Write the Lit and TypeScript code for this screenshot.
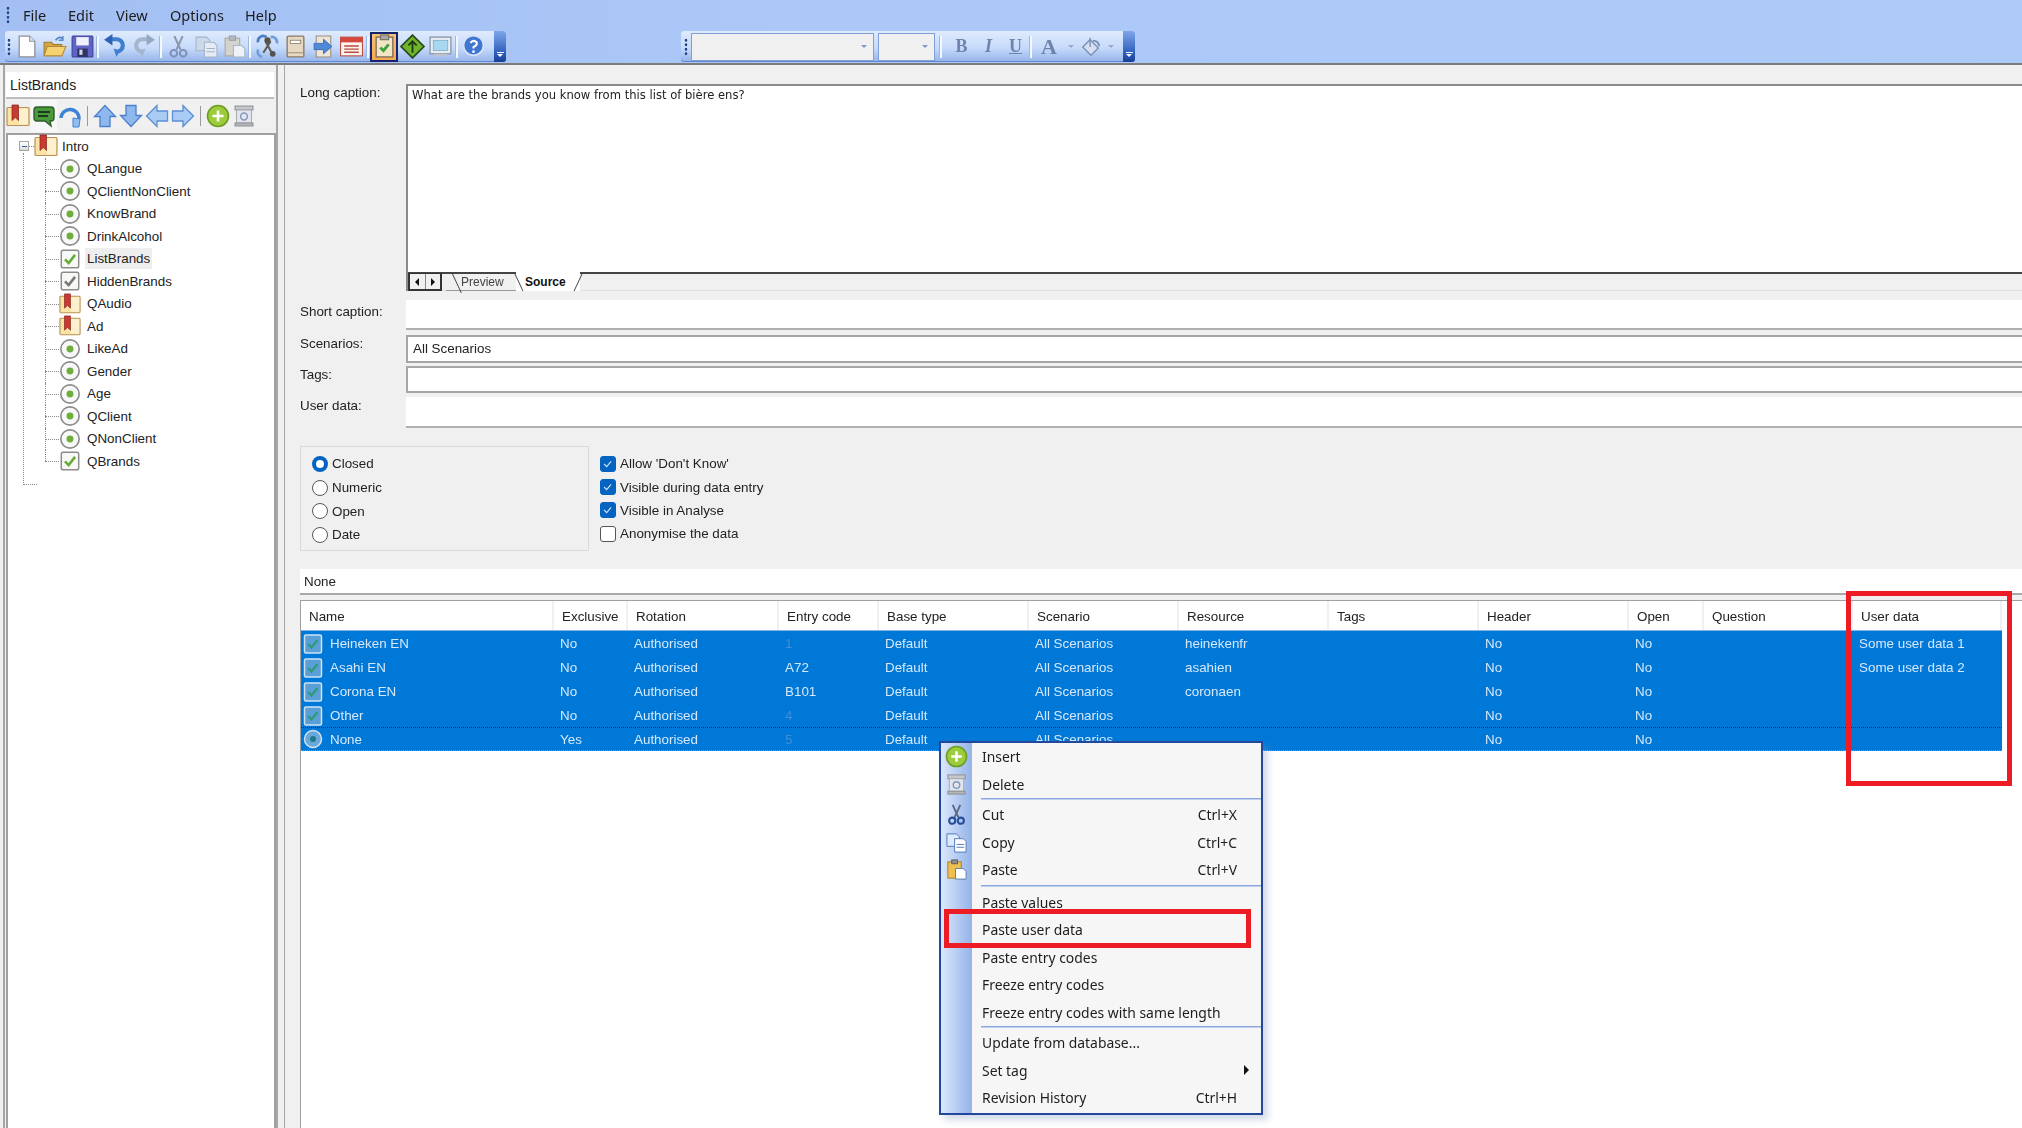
import { LitElement, html, css, svg } from "lit";
import { customElement } from "lit/decorators.js";

const I: Record<string, any> = {
  book: svg`<rect x="1" y="3.500" width="22" height="18" rx="1" fill="#fbe3a6" stroke="#b8925a" stroke-width="1.200"/><rect x="13" y="4.500" width="9" height="16" fill="#fdf0cd"/><path d="M6 1h6.500v15.500l-3.250-3-3.250 3z" fill="#c93a30" stroke="#8e2a26" stroke-width=".8"/>`,
  radio: svg`<circle cx="12" cy="12" r="10" fill="#f8f8f8" stroke="#8c8c8c" stroke-width="1.800"/><circle cx="12" cy="12" r="3.800" fill="#6fae3c"/>`,
  check: svg`<rect x="2.500" y="2.500" width="19" height="19" rx="2" fill="#f8f8f6" stroke="#8c8c8c" stroke-width="1.600"/><path d="M6.500 12.500l4 4 7-9" fill="none" stroke="#63ad35" stroke-width="2.800"/>`,
  hidden: svg`<rect x="2.500" y="2.500" width="19" height="19" rx="2" fill="#f8f8f6" stroke="#8c8c8c" stroke-width="1.600"/><path d="M6.500 12.500l4 4 7-9" fill="none" stroke="#777" stroke-width="2.800"/>`,
  comment: svg`<path d="M5 3h14q3 0 3 3v8q0 3-3 3h-1l1 5-6-5H5q-3 0-3-3V6q0-3 3-3z" fill="#4a9a3c" stroke="#2e5e2a" stroke-width="1.400"/><path d="M6 8h12M6 12h10" stroke="#1e3a20" stroke-width="1.800"/>`,
  loop: svg`<path d="M3 14a9 9 0 1 1 18 1" fill="none" stroke="#3f83d6" stroke-width="3.400"/><path d="M15 23v-9l7 1-1 8z" fill="#8ebdf0" stroke="#3f83d6"/>`,
  up: svg`<path d="M12 1.500l10.500 11H17v10H7v-10H1.500z" fill="#8eb8ee" stroke="#4b7fc9" stroke-width="1.300"/>`,
  down: svg`<path d="M12 22.500L1.500 11.500H7v-10h10v10h5.500z" fill="#8eb8ee" stroke="#4b7fc9" stroke-width="1.300"/>`,
  left: svg`<path d="M1.500 12L12 1.500V7h10.500v10H12v5.500z" fill="#a9cbf4" stroke="#5d8fd6" stroke-width="1.300"/>`,
  right: svg`<path d="M22.500 12L12 1.500V7H1.500v10H12v5.500z" fill="#a9cbf4" stroke="#5d8fd6" stroke-width="1.300"/>`,
  plus: svg`<circle cx="12" cy="12" r="10.500" fill="#9ccc3c" stroke="#6c9e25" stroke-width="1.600"/><path d="M12 6.500v11M6.500 12h11" stroke="#fff" stroke-width="2.600"/>`,
  bin: svg`<rect x="3" y="2" width="18" height="4" fill="#c4c8ce" stroke="#8d8f94"/><rect x="4.500" y="6" width="15" height="13" fill="#e2e6ec" stroke="#a7aab0"/><circle cx="12" cy="12.500" r="3.400" fill="none" stroke="#8499bd" stroke-width="1.500"/><rect x="3" y="19" width="18" height="3" fill="#b4b7bc" stroke="#8d8f94"/>`,
  page: svg`<path d="M5 2h10l5 5v15H5z" fill="#fff" stroke="#8a8f99" stroke-width="1.200"/><path d="M15 2v5h5" fill="#dfe5ee" stroke="#8a8f99"/>`,
  folder: svg`<path d="M2 8h7l2 2h8v10H2z" fill="#d4a445" stroke="#a07b2c"/><path d="M5 12h18l-4 9H2z" fill="#f6d271" stroke="#b08a33"/><path d="M13 6q4-5 7-1" fill="none" stroke="#5a87c6" stroke-width="1.600"/><path d="M20 2v4h-4" fill="none" stroke="#5a87c6" stroke-width="1.400"/>`,
  save: svg`<rect x="2" y="2" width="20" height="20" rx="1" fill="#5f63c5" stroke="#3c3f96"/><rect x="6" y="3" width="12" height="8" fill="#eef0fa"/><rect x="7" y="14" width="10" height="8" fill="#30325f"/><rect x="9" y="15" width="3" height="5" fill="#d4d6ea"/>`,
  undo: svg`<path d="M9 5h5a5.500 5.500 0 0 1 0 12h-1" fill="none" stroke="#3f7fd0" stroke-width="4"/><path d="M10 0v11L2 5.500z" fill="#2d63b5"/><path d="M11 14l3 8 3-6z" fill="#3f7fd0"/>`,
  redo: svg`<path d="M15 5h-5a5.500 5.500 0 0 0 0 12h1" fill="none" stroke="#a4b5cd" stroke-width="4"/><path d="M14 0v11l8-5.500z" fill="#94a8c3"/><path d="M13 14l-3 8-3-6z" fill="#a4b5cd"/>`,
  cut: svg`<path d="M8 2l6 13M16 2l-6 13" stroke="#8a97ad" stroke-width="2"/><circle cx="7.500" cy="18.500" r="3.200" fill="none" stroke="#7d93bc" stroke-width="2"/><circle cx="16.500" cy="18.500" r="3.200" fill="none" stroke="#7d93bc" stroke-width="2"/>`,
  cutOn: svg`<path d="M8 2l6 13M16 2l-6 13" stroke="#5c6a80" stroke-width="2"/><circle cx="7.500" cy="18.500" r="3.200" fill="none" stroke="#27509c" stroke-width="2.200"/><circle cx="16.500" cy="18.500" r="3.200" fill="none" stroke="#27509c" stroke-width="2.200"/>`,
  copy: svg`<path d="M2 3h10l3 3v10H2z" fill="#ccd9ea" stroke="#a5b3c6"/><path d="M10 8h9l3 3v11H10z" fill="#e4ebf4" stroke="#a5b3c6"/><path d="M12 14h8M12 17h8" stroke="#a5b3c6"/>`,
  copyOn: svg`<path d="M2 3h10l3 3v10H2z" fill="#dfeafc" stroke="#4f78bc"/><path d="M10 8h9l3 3v11H10z" fill="#fff" stroke="#4f78bc"/><path d="M12 14h8M12 17h8" stroke="#4f78bc"/>`,
  paste: svg`<rect x="3" y="4" width="14" height="17" fill="#d5d4cc" stroke="#a5a79f"/><rect x="7" y="2" width="6" height="4" fill="#b6bcc6" stroke="#989ca5"/><path d="M11 11h8l3 3v8H11z" fill="#eef1f6" stroke="#a5b3c6"/>`,
  pasteOn: svg`<rect x="3" y="4" width="14" height="17" fill="#eec052" stroke="#a57f2a"/><rect x="7" y="2" width="6" height="4" fill="#8d8f94" stroke="#5a5c60"/><path d="M11 11h8l3 3v8H11z" fill="#fff" stroke="#5c7cb0"/>`,
  wizard: svg`<path d="M10 7l6 11M15 7L8 18" stroke="#5e5c58" stroke-width="2"/><path d="M3 8a5 5 0 0 1 8-5" fill="none" stroke="#4a7ec8" stroke-width="2.600"/><path d="M15 3a5 5 0 0 1 6 6" fill="none" stroke="#6d9ee0" stroke-width="2.600"/><path d="M3 15a5 5 0 0 0 4 7" fill="none" stroke="#6d9ee0" stroke-width="2.600"/><circle cx="12" cy="6" r="3" fill="#55534e"/><circle cx="17" cy="19" r="2.800" fill="#55534e"/>`,
  note: svg`<rect x="4" y="2" width="16" height="20" rx="1" fill="#e6d9c4" stroke="#8a7a64" stroke-width="1.300"/><rect x="7" y="6" width="10" height="3" fill="#fff" stroke="#8a7a64" stroke-width=".8"/><path d="M4 18h16" stroke="#a09078"/>`,
  imp: svg`<path d="M5 2h14v20H5z" fill="#ece5d8" stroke="#9a8e7c"/><path d="M3 9h9V5l8 7-8 7v-4H3z" fill="#4e8ad8" stroke="#2f68b5" stroke-width=".8"/>`,
  list: svg`<rect x="1.500" y="3" width="21" height="18" fill="#faf4ee" stroke="#b84a3e"/><rect x="1.500" y="3" width="21" height="5" fill="#d4483c"/><path d="M5 11.500h14M5 14.500h14M5 17.500h14" stroke="#b84a3e" stroke-width="1.300"/>`,
  clip: svg`<rect x="4" y="3" width="16" height="19" fill="#f3e6c8" stroke="#7c6f58" stroke-width="1.300"/><rect x="8" y="1" width="8" height="4.500" fill="#a9a69d" stroke="#6e6c66"/><path d="M8 13l3 3 5-6" fill="none" stroke="#3da23a" stroke-width="2.800"/>`,
  diamond: svg`<path d="M12 1l11 11-11 11L1 12z" fill="#6fb52a" stroke="#2c4a1d" stroke-width="1.600"/><path d="M12 18V7M8 11l4-4 4 4" fill="none" stroke="#1f3a14" stroke-width="1.800"/>`,
  monitor: svg`<rect x="2" y="3" width="20" height="16" fill="#e8edf4" stroke="#8d97a6" stroke-width="1.300"/><rect x="5" y="6" width="14" height="10" fill="#a8d8ef" stroke="#6f9ec2" stroke-width=".6"/><rect x="6" y="19" width="12" height="2.500" fill="#bcc3cd"/>`,
  help: svg`<circle cx="12" cy="11" r="9.500" fill="#3e76d2" stroke="#d5e2f6" stroke-width="1.600"/><path d="M9 8.500q3-3.500 6-.5 1 2.500-3 4.500v1.500" fill="none" stroke="#fff" stroke-width="2"/><circle cx="12" cy="17" r="1.300" fill="#fff"/>`,
  paint: svg`<path d="M11 4l9 9-8 8-9-9z" fill="#d4dff0" stroke="#7b8fb5" stroke-width="1.500"/><path d="M11 12V2" stroke="#7b8fb5" stroke-width="1.500"/><path d="M14 5q6 0 7 6" fill="none" stroke="#7b8fb5" stroke-width="2"/>`,
};

const ic = (n: string, cls = "i") => html`<svg class=${cls} viewBox="0 0 24 24">${I[n]}</svg>`;

const TREE: [string, string][] = [
  ["QLangue", "radio"], ["QClientNonClient", "radio"], ["KnowBrand", "radio"], ["DrinkAlcohol", "radio"],
  ["ListBrands", "check"], ["HiddenBrands", "hidden"], ["QAudio", "book"], ["Ad", "book"],
  ["LikeAd", "radio"], ["Gender", "radio"], ["Age", "radio"], ["QClient", "radio"], ["QNonClient", "radio"], ["QBrands", "check"],
];
const HEAD = ["Name", "Exclusive", "Rotation", "Entry code", "Base type", "Scenario", "Resource", "Tags", "Header", "Open", "Question", "User data"];
const ROWS = [
  { ic: "c", name: "Heineken EN", ex: "No", code: "1", dim: true, res: "heinekenfr", ud: "Some user data 1" },
  { ic: "c", name: "Asahi EN", ex: "No", code: "A72", dim: false, res: "asahien", ud: "Some user data 2" },
  { ic: "c", name: "Corona EN", ex: "No", code: "B101", dim: false, res: "coronaen", ud: "" },
  { ic: "c", name: "Other", ex: "No", code: "4", dim: true, res: "", ud: "" },
  { ic: "r", name: "None", ex: "Yes", code: "5", dim: true, res: "", ud: "" },
];

@customElement("app-root")
export class AppRoot extends LitElement {
  static styles = css`
    :host { display: block; position: relative; width: 2022px; height: 1128px; overflow: hidden; background: #f0f0f0;
      font: 13.400px "Liberation Sans", Arial, sans-serif; color: #222; }
    * { box-sizing: border-box; }
    .soft { filter: blur(.45px); }
    .i { width: 24px; height: 24px; display: block; flex: none; }
    .i18 { width: 22px; height: 22px; display: block; flex: none; }

    .top { height: 65px; background: linear-gradient(to right, #a3bff3, #abc8f8 40%, #aecaf7); border-bottom: 2px solid #7c7c7c; }
    .menubar { height: 31px; display: flex; align-items: center; padding: 0 0 2px 6px; font: 14.500px "Noto Sans", sans-serif; color: #1c1c1c; }
    .grip { width: 4px; height: 18px; flex: none; background: radial-gradient(circle, #27468a 1.300px, transparent 1.600px) 0 0 / 4px 4.500px repeat-y; }
    .m1 { margin-left: 13px; width: 45px; } .m2 { width: 48px; } .m3 { width: 54px; } .m4 { width: 75px; }
    .bars { display: flex; height: 31px; }
    .tb { display: flex; align-items: center; height: 31px; border-radius: 3px;
      background: linear-gradient(#dfebfd, #c6dafa 55%, #9ab8ec 95%); box-shadow: inset 0 -1px 0 #5f88cf; }
    .tb1 { margin-left: 5px; width: 501px; padding-left: 2px; }
    .tb2 { margin-left: 175px; width: 454px; padding-left: 3px; }
    .tb .grip { margin-right: 1px; }
    .tb2 .grip { margin-right: 3px; }
    .b { width: 28px; height: 28px; flex: none; display: flex; align-items: center; justify-content: center; }
    .b .i { width: 25px; height: 25px; }
    .b.gap { margin-left: 2px; }
    .b.on { background: linear-gradient(#f8c27a, #f5a94e); border: 2px solid #14236e; height: 30px; }
    .s { width: 2px; height: 22px; background: #f3f8ff; box-shadow: -1px 0 0 #9db8e4; margin: 0 1px; flex: none; }
    .s.a { margin: 0 2px; }
    .s.c { margin: 0 2px 0 1px; }
    .s.d { margin: 0 1px 0 2px; }
    .s.w { margin: 0 6px 0 5px; }
    .chev { margin-left: auto; width: 12px; height: 31px; flex: none; border-radius: 0 3px 3px 0; background: linear-gradient(#7ea6ea, #2e5fba 70%, #173f93);
      display: flex; flex-direction: column; align-items: center; justify-content: flex-end; padding-bottom: 5px; }
    .chev i { display: block; width: 7px; height: 1px; background: #fff; margin-bottom: 1px; }
    .chev b { display: block; width: 0; height: 0; border: 3px solid transparent; border-top-color: #fff; border-bottom: 0; }
    .combo { height: 28px; background: #f0f0f0; border: 1.500px solid #7f9fd6; display: flex; align-items: center; justify-content: flex-end; padding-right: 6px; flex: none; }
    .combo i { display: block; width: 0; height: 0; border: 3.500px solid transparent; border-top-color: #7b98c8; border-bottom: 0; }
    .c1 { width: 183px; } .c2 { width: 57px; margin-left: 4px; }
    .fm { font: bold 18px "Liberation Serif", serif; color: #6f84ad; width: 27px; text-align: center; flex: none; }
    .fm.ital { font-style: italic; } .fm.un { text-decoration: underline; }
    .fm.big { font-size: 22px; width: 26px; margin-left: 3px; }
    .dd { width: 0; height: 0; border: 3px solid transparent; border-top-color: #96a8c6; border-bottom: 0; flex: none; margin: 0 6px; }

    .main { display: flex; height: 1063px; }
    .left { width: 275px; flex: none; margin-left: 3px; border-left: 2px solid #a6a6a6; border-right: 2px solid #a6a6a6; padding-left: 1px; display: flex; flex-direction: column; }
    .title { margin: 7px 2px 0 0; height: 27px; background: #fff; border-bottom: 2px solid #bdbdbd; padding: 0 4px; display: flex; align-items: center; font-size: 14px; }
    .ltools { height: 34px; display: flex; align-items: center; margin-left: -1px; }
    .lb { width: 26px; height: 26px; flex: none; display: flex; align-items: center; justify-content: center; }
    .lb .i { width: 24px; height: 24px; }
    .lb.act { background: #f7f7f7; height: 32px; }
    .ls { width: 1px; height: 20px; background: #9a9a9a; margin: 0 4px; flex: none; }
    .tree { flex: 1; background: #fff; border: 2px solid #a0a0a0; border-bottom: 0; position: relative; }
    .node { height: 22.500px; display: flex; align-items: center; padding-left: 51px; position: relative; }
    .node .i { width: 22px; height: 22px; margin-right: 5px; position: relative; }
    .node::before { content: ""; position: absolute; left: 37px; top: 0; height: 100%; border-left: 1px dotted #888; }
    .node::after { content: ""; position: absolute; left: 37px; top: 50%; width: 14px; border-top: 1px dotted #888; }
    .node.last::before { height: 50%; }
    .node span { padding: 0 1px; line-height: 21px; }
    .node.sel span { background: #eee; padding: 0 2px; margin-left: -1px; }
    .root { height: 22.500px; display: flex; align-items: center; padding-left: 11px; position: relative; }
    .root .mn { width: 10px; height: 10px; border: 1px solid #a3a3a3; background: linear-gradient(#fff, #ddd); position: relative; flex: none; }
    .root .mn::after { content: ""; position: absolute; left: 1.500px; top: 3.500px; width: 5px; height: 1px; background: #3c5f99; }
    .root .hl { width: 5px; border-top: 1px dotted #888; flex: none; }
    .root .i { width: 24px; height: 24px; margin-right: 4px; }
    .trunk { height: 12px; margin-left: 15px; width: 14px; border-bottom: 1px dotted #888; }
    .nodes { position: relative; }
    .nodes::before { content: ""; position: absolute; left: 15px; top: -5px; bottom: 0; border-left: 1px dotted #888; }

    .split { width: 7px; flex: none; border-right: 1px solid #a6a6a6; }
    .right { flex: 1; min-width: 0; padding: 19px 0 0 15px; }
    .fr { display: grid; grid-template-columns: 106px 1fr; margin-top: 4px; }
    .fr label { padding-top: 1px; line-height: 16px; }
    .ed { height: 207px; background: #fff; border: 2px solid #8a8a8a; border-right: 0; border-bottom: 0; display: flex; flex-direction: column; }
    .ed p { margin: 0; flex: 1; padding: 1px 3px 1px 4px; font: 11.580px/16px "DejaVu Sans", sans-serif; color: #222; }
    .strip { height: 19px; flex: none; border-top: 2px solid #444; background: #f0f0f0; display: flex; border-bottom: 1px solid #dedede; }
    .nav { width: 34px; height: 18px; margin-top: -1px; border: 2px solid #333; border-top-width: 1px; display: flex; flex: none; background: #f0f0f0; }
    .nav span { flex: 1; display: flex; align-items: center; justify-content: center; }
    .nav span + span { border-left: 1px solid #888; }
    .nav i { display: block; width: 0; height: 0; border: 4px solid transparent; }
    .nav .lf { border-right-color: #111; border-left: 0; } .nav .rt { border-left-color: #111; border-right: 0; }
    .tab { position: relative; height: 17px; display: flex; align-items: center; font-size: 12px; flex: none; }
    .tab::before, .tab::after { content: ""; position: absolute; top: 0; height: 19px; border-left: 1px solid #444; }
    .t1 { width: 70px; padding-left: 15px; margin-left: 4px; color: #444; border-bottom: 1px solid #999; }
    .t1::before { left: 6px; transform: skewX(25deg); transform-origin: top; }
    .t1::after { display: none; }
    .t2 { width: 64px; padding-left: 9px; margin-top: -2px; height: 19px; background: #fff; font-weight: bold; color: #111; }
    .t2::before { left: 2px; transform: skewX(25deg); }
    .t2::after { right: 1px; transform: skewX(-25deg); }
    .fld { background: #fff; border-bottom: 2px solid #b0b0b0; }
    .box { background: #fff; border: 2px solid #a6a6a6; border-right: 0; display: flex; align-items: center; padding-left: 5px; }
    .h30 { height: 30px; } .h27 { height: 27.500px; } .h31 { height: 31px; }
    .mt0 { margin-top: 0; } .mt9 { margin-top: 9px; } .mt5 { margin-top: 5px; } .mt3 { margin-top: 3px; }
    .fr label.pt4 { padding-top: 4px; }
    .opts { display: flex; margin-top: 18px; }
    .group { width: 289px; height: 105px; border: 1px solid #dadada; padding: 5px 0 0 11px; flex: none; }
    .opt { height: 23.700px; display: flex; align-items: center; gap: 4px; }
    .rd { width: 16px; height: 16px; border: 1.500px solid #555; border-radius: 50%; background: #fff; flex: none; }
    .rd.on { border: 4.500px solid #0563c1; }
    .cks { margin-left: 11px; padding-top: 6px; }
    .ck { height: 23.400px; display: flex; align-items: center; gap: 4px; }
    .cb { width: 16px; height: 16px; border-radius: 3px; border: 1.500px solid #555; background: #fff; flex: none; display: block; }
    .cb.on { background: #0563c1; border-color: #0563c1; }
    .none { margin-top: 18px; height: 26px; background: #fff; border-bottom: 2px solid #a8a8a8; padding-left: 4px; display: flex; align-items: center; }
    .table { margin-top: 5px; height: 530px; background: #fff; border: 1px solid #a0a0a0; border-right: 0; border-bottom: 0; }
    .g { display: grid; grid-template-columns: 251px 74px 151px 100px 150px 150px 150px 150px 150px 75px 149px 151px; width: 1701px; }
    .hd { height: 30px; border-bottom: 1px solid #7fb4ea; }
    .hd div { padding: 2px 0 0 8px; border-left: 2px solid #f0f0f0; display: flex; align-items: center; }
    .hd div:first-child { border-left: 0; }
    .hd div:last-child { border-right: 2px solid #f0f0f0; }
    .rw { height: 24px; background: #0078d7; color: #d6e8fb; align-items: center; }
    .rw.foc { border-top: 1px dotted #3a2a10; border-bottom: 1px dotted #c8862e; }
    .rw div { padding-left: 8px; white-space: nowrap; padding-top: 1px; }
    .rw.foc div { padding-top: 0; }
    .rw .nm { display: flex; align-items: center; padding-left: 2px; height: 100%; gap: 7px; }
    .rw .nm svg { width: 20px; height: 22px; flex: none; }
    .dim { color: #3f8fd6; }
    .ctx { position: absolute; left: 939px; top: 741px; width: 324px; height: 374px; border: 2px solid #23479b; box-shadow: 5px 5px 7px rgba(130, 150, 190, .35);
      background: linear-gradient(to right, #dbe8fc, #94b3e8) 0 0 / 31px 100% no-repeat, #f6f6f6;
      font: 13.900px "Noto Sans", sans-serif; color: #1d1d1d; }
    .mi { height: 27.500px; display: flex; align-items: center; position: relative; }
    .mi .g0 { width: 31px; flex: none; display: flex; justify-content: center; }
    .mi .g0 svg { width: 23px; height: 23px; }
    .mi .t { margin-left: 10px; flex: 1; }
    .mi .k { margin-right: 24px; }
    .mi .ar { width: 0; height: 0; border: 5px solid transparent; border-left-color: #111; border-right: 0; margin-right: 12px; }
    .sp { height: 3px; margin-left: 40px; background: linear-gradient(#8aa9e0, #8aa9e0) 0 0 / 100% 1.500px no-repeat; }
    .sp.l { height: 5px; background-position: 0 1.500px; }
    .red { position: absolute; border: 5px solid #ed1c24; pointer-events: none; }
    .r1 { left: 1846px; top: 591px; width: 166px; height: 195px; }
    .r2 { left: 944px; top: 909px; width: 307px; height: 39px; }
  `;

  private item(label: string, icon?: string, key?: string, arrow = false) {
    return html`<div class="mi"><div class="g0">${icon ? html`<svg viewBox="0 0 24 24">${I[icon]}</svg>` : ""}</div><span class="t">${label}</span>${key ? html`<span class="k">${key}</span>` : ""}${arrow ? html`<span class="ar"></span>` : ""}</div>`;
  }

  render() {
    const b = (n: string, c = "") => html`<div class="b ${c}">${ic(n)}</div>`;
    const lb = (n: string, c = "") => html`<div class="lb ${c}">${ic(n)}</div>`;
    return html`
      <div class="top soft">
        <div class="menubar"><div class="grip"></div><span class="m1">File</span><span class="m2">Edit</span><span class="m3">View</span><span class="m4">Options</span><span>Help</span></div>
        <div class="bars">
          <div class="tb tb1">
            <div class="grip"></div>
            ${b("page")}${b("folder")}${b("save")}<div class="s"></div>
            ${b("undo")}${b("redo", "gap")}<div class="s a"></div>
            ${b("cut")}${b("copy")}${b("paste")}<div class="s c"></div>
            ${b("wizard")}${b("note")}${b("imp")}${b("list")}<div class="s d"></div>
            ${b("clip", "on")}${b("diamond")}${b("monitor")}<div class="s d"></div>
            ${b("help")}
            <div class="chev"><i></i><b></b></div>
          </div>
          <div class="tb tb2">
            <div class="grip"></div>
            <div class="combo c1"><i></i></div><div class="combo c2"><i></i></div>
            <div class="s w"></div>
            <span class="fm">B</span><span class="fm ital">I</span><span class="fm un">U</span><div class="s"></div>
            <span class="fm big">A</span><span class="dd"></span>${ic("paint", "i18")}<span class="dd"></span>
            <div class="chev"><i></i><b></b></div>
          </div>
        </div>
      </div>
      <div class="main soft">
        <div class="left">
          <div class="title">ListBrands</div>
          <div class="ltools">
            ${lb("book")}${lb("comment", "act")}${lb("loop")}<div class="ls"></div>
            ${lb("up")}${lb("down")}${lb("left")}${lb("right")}<div class="ls"></div>
            ${lb("plus")}${lb("bin")}
          </div>
          <div class="tree">
            <div class="root"><span class="mn"></span><span class="hl"></span>${ic("book")}<span>Intro</span></div>
            <div class="nodes">
              ${TREE.map((t, i) => html`<div class="node ${t[0] === "ListBrands" ? "sel" : ""} ${i === TREE.length - 1 ? "last" : ""}">${ic(t[1])}<span>${t[0]}</span></div>`)}
              <div class="trunk"></div>
            </div>
          </div>
        </div>
        <div class="split"></div>
        <div class="right">
          <div class="fr mt0">
            <label>Long caption:</label>
            <div class="ed">
              <p>What are the brands you know from this list of bière ens?</p>
              <div class="strip">
                <div class="nav"><span><i class="lf"></i></span><span><i class="rt"></i></span></div>
                <div class="tab t1">Preview</div>
                <div class="tab t2">Source</div>
              </div>
            </div>
          </div>
          <div class="fr mt9"><label class="pt4">Short caption:</label><div class="fld h30"></div></div>
          <div class="fr mt5"><label>Scenarios:</label><div class="box h27">All Scenarios</div></div>
          <div class="fr mt3"><label>Tags:</label><div class="box h27"></div></div>
          <div class="fr"><label>User data:</label><div class="fld h31"></div></div>
          <div class="opts">
            <div class="group">
              <div class="opt"><span class="rd on"></span>Closed</div>
              <div class="opt"><span class="rd"></span>Numeric</div>
              <div class="opt"><span class="rd"></span>Open</div>
              <div class="opt"><span class="rd"></span>Date</div>
            </div>
            <div class="cks">
              ${[["Allow 'Don't Know'", 1], ["Visible during data entry", 1], ["Visible in Analyse", 1], ["Anonymise the data", 0]].map(
                ([t, on]) => html`<div class="ck">${on
                  ? html`<svg class="cb on" viewBox="0 0 16 16"><path d="M3.500 8l3 3 5-6" fill="none" stroke="#cfe2f7" stroke-width="1.300"/></svg>`
                  : html`<span class="cb"></span>`}${t}</div>`)}
            </div>
          </div>
          <div class="none">None</div>
          <div class="table">
            <div class="g hd">${HEAD.map((h) => html`<div>${h}</div>`)}</div>
            ${ROWS.map((r, i) => html`<div class="g rw ${i === 4 ? "foc" : ""}">
              <div class="nm">
                <svg viewBox="0 0 20 22">${r.ic === "c"
                  ? svg`<rect x="1.500" y="2" width="17" height="18" rx="1.500" fill="#5b9fd8" stroke="#cfe2f5" stroke-width="1.500"/><path d="M5 11l3.500 3.500L14.500 7" fill="none" stroke="#2f9a7a" stroke-width="2.400"/>`
                  : svg`<circle cx="10" cy="11" r="8.500" fill="#6aa8dc" stroke="#cfe2f5" stroke-width="1.500"/><circle cx="10" cy="11" r="3" fill="#1f7a8a"/>`}</svg>
                <span>${r.name}</span>
              </div>
              <div>${r.ex}</div><div>Authorised</div><div class=${r.dim ? "dim" : ""}>${r.code}</div><div>Default</div><div>All Scenarios</div><div>${r.res}</div><div></div><div>No</div><div>No</div><div></div><div>${r.ud}</div>
            </div>`)}
          </div>
        </div>
      </div>
      <div class="ctx soft">
        ${this.item("Insert", "plus")}${this.item("Delete", "bin")}<div class="sp"></div>
        ${this.item("Cut", "cutOn", "Ctrl+X")}${this.item("Copy", "copyOn", "Ctrl+C")}${this.item("Paste", "pasteOn", "Ctrl+V")}<div class="sp l"></div>
        ${this.item("Paste values")}${this.item("Paste user data")}${this.item("Paste entry codes")}${this.item("Freeze entry codes")}${this.item("Freeze entry codes with same length")}<div class="sp"></div>
        ${this.item("Update from database...")}${this.item("Set tag", undefined, undefined, true)}${this.item("Revision History", undefined, "Ctrl+H")}
      </div>
      <div class="red r1"></div>
      <div class="red r2"></div>
    `;
  }
}
